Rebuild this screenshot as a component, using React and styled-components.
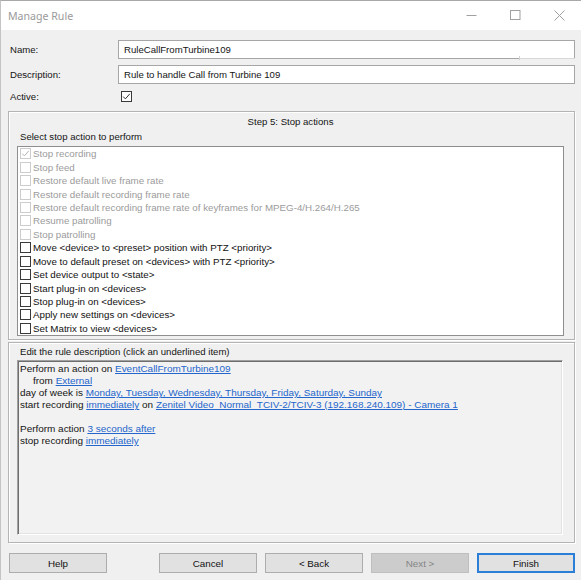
import React from "react";
import styled, { createGlobalStyle } from "styled-components";

const GlobalStyle = createGlobalStyle`
  html, body { margin: 0; padding: 0; background: #f0f0f0; }
  body { font-family: "Liberation Sans", Arial, sans-serif; }
  * { box-sizing: border-box; }
`;

const Window = styled.div`
  width: 581px;
  height: 580px;
  display: flex;
  flex-direction: column;
  background: #f0f0f0;
  border-top: 1px solid #a8a8a8;
  border-left: 1px solid #c4c4c4;
  overflow: hidden;
`;

const TitleBar = styled.div`
  height: 29px;
  flex: none;
  display: flex;
  align-items: center;
  background: #ffffff;
  padding-left: 7px;
`;

const Title = styled.div`
  flex: 1;
  font-family: "Noto Sans", "Open Sans", sans-serif;
  font-size: 10.6px;
  color: #9a9a9a;
  padding-top: 1px;
`;

const Controls = styled.div`
  display: flex;
`;

const CtrlButton = styled.div`
  width: 44px;
  height: 29px;
  display: flex;
  align-items: center;
  justify-content: center;
  color: #a0a0a0;
`;

const Body = styled.div`
  flex: 1;
  display: flex;
  flex-direction: column;
  padding: 10px 6px 7px 7px;
  font-size: 9.6px;
  color: #141414;
`;

const FormGrid = styled.div`
  display: grid;
  grid-template-columns: 110px 1fr;
  row-gap: 6px;
  align-items: center;
`;

const Label = styled.div`
  padding-left: 2px;
  line-height: 12px;
`;

const TextInput = styled.div`
  position: relative;
  height: 19px;
  background: #ffffff;
  border: 1px solid #a6a6a6;
  padding-left: 5px;
  display: flex;
  align-items: center;
  ${(p) =>
    p.$split &&
    `
    &::after {
      content: "";
      position: absolute;
      left: 400px;
      right: -1px;
      bottom: -1px;
      height: 1px;
      background: #d8d8d8;
    }
    &::before {
      content: "";
      position: absolute;
      left: 400px;
      bottom: -2px;
      width: 1px;
      height: 4px;
      background: #d0d0d0;
    }
  `}
`;

const CheckCell = styled.div`
  height: 13px;
  display: flex;
  align-items: center;
  padding-left: 3px;
`;

const Box = styled.span`
  width: 11px;
  height: 11px;
  flex: none;
  display: inline-flex;
  align-items: center;
  justify-content: center;
  background: #ffffff;
  border: 1px solid ${(p) => (p.$disabled ? "#cccccc" : "#3a3a3a")};
`;

const GroupBox = styled.div`
  border: 1px solid #b4b4b4;
  box-shadow: inset 1px 1px 0 #ffffff, 1px 1px 0 #ffffff;
  display: flex;
  flex-direction: column;
  margin-top: ${(p) => p.$mt}px;
  padding: ${(p) => p.$pad};
  ${(p) => p.$grow && "flex: 1;"}
`;

const GroupTitle = styled.div`
  text-align: center;
  line-height: 12px;
  height: 12px;
`;

const Caption = styled.div`
  line-height: 12px;
  height: 12px;
  padding-left: 3px;
  margin-top: ${(p) => p.$mt}px;
`;

const ListBox = styled.div`
  margin-top: 3px;
  background: #ffffff;
  border: 1px solid #8e8e8e;
  display: flex;
  flex-direction: column;
  font-size: 9.75px;
`;

const ListItem = styled.div`
  height: 13.45px;
  display: flex;
  align-items: center;
  padding-left: 2px;
  gap: 2px;
  color: ${(p) => (p.$disabled ? "#9b9b9b" : "#111111")};
  white-space: nowrap;
`;

const DescBox = styled.div`
  flex: 1;
  margin-top: 2px;
  margin-right: 1px;
  background: #f2f2f2;
  border-top: 1px solid #a0a0a0;
  border-left: 1px solid #a0a0a0;
  border-bottom: 1px solid #ffffff;
  border-right: 1px solid #ffffff;
  box-shadow: inset 1px 1px 0 #6e6e6e, inset -1px -1px 0 #e3e3e3;
  padding: 2px;
  font-size: 9.95px;
`;

const DescLine = styled.div`
  line-height: 12px;
  height: 12px;
  white-space: nowrap;
  padding-left: ${(p) => (p.$indent ? 13 : 0)}px;
`;

const Link = styled.span`
  color: #2466cc;
  text-decoration: underline;
  text-underline-offset: 1px;
`;

const ButtonRow = styled.div`
  margin-top: 10px;
  display: flex;
  gap: 8px;
  padding-left: 1px;
`;

const Spacer = styled.div`
  flex: 1;
`;

const Button = styled.div`
  width: 98px;
  height: 20px;
  display: flex;
  align-items: center;
  justify-content: center;
  font-size: 9.8px;
  background: ${(p) => (p.$disabled ? "#cccccc" : "#e1e1e1")};
  border: 1px solid ${(p) => (p.$primary ? "#2b7fd6" : p.$disabled ? "#bfbfbf" : "#adadad")};
  box-shadow: ${(p) => (p.$primary ? "inset 0 0 0 1px #2b7fd6" : "none")};
  color: ${(p) => (p.$disabled ? "#858585" : "#111111")};
`;

const Check = ({ color = "#333" }) => (
  <svg width="9" height="9" viewBox="0 0 9 9">
    <polyline points="1.2,4.6 3.4,6.9 7.8,1.8" fill="none" stroke={color} strokeWidth="1" />
  </svg>
);

const CheckBox = ({ checked, disabled }) => (
  <Box $disabled={disabled}>{checked && <Check color={disabled ? "#b5b5b5" : "#333333"} />}</Box>
);

const items = [
  { t: "Stop recording", d: true, c: true },
  { t: "Stop feed", d: true },
  { t: "Restore default live frame rate", d: true },
  { t: "Restore default recording frame rate", d: true },
  { t: "Restore default recording frame rate of keyframes for MPEG-4/H.264/H.265", d: true },
  { t: "Resume patrolling", d: true },
  { t: "Stop patrolling", d: true },
  { t: "Move <device> to <preset> position with PTZ <priority>" },
  { t: "Move to default preset on <devices> with PTZ <priority>" },
  { t: "Set device output to <state>" },
  { t: "Start plug-in on <devices>" },
  { t: "Stop plug-in on <devices>" },
  { t: "Apply new settings on <devices>" },
  { t: "Set Matrix to view <devices>" },
];

export default function App() {
  return (
    <>
      <GlobalStyle />
      <Window>
        <TitleBar>
          <Title>Manage Rule</Title>
          <Controls>
            <CtrlButton>
              <svg width="11" height="11" viewBox="0 0 11 11">
                <line x1="0.5" y1="5.5" x2="10.5" y2="5.5" stroke="currentColor" strokeWidth="1" />
              </svg>
            </CtrlButton>
            <CtrlButton>
              <svg width="11" height="11" viewBox="0 0 11 11">
                <rect x="0.5" y="0.5" width="9.5" height="9" fill="none" stroke="currentColor" strokeWidth="1" />
              </svg>
            </CtrlButton>
            <CtrlButton>
              <svg width="11" height="11" viewBox="0 0 11 11">
                <path d="M0.5 0.5 L10.5 10.5 M10.5 0.5 L0.5 10.5" stroke="currentColor" strokeWidth="1" />
              </svg>
            </CtrlButton>
          </Controls>
        </TitleBar>
        <Body>
          <FormGrid>
            <Label>Name:</Label>
            <TextInput $split>RuleCallFromTurbine109</TextInput>
            <Label>Description:</Label>
            <TextInput>Rule to handle Call from Turbine 109</TextInput>
            <Label>Active:</Label>
            <CheckCell>
              <CheckBox checked />
            </CheckCell>
          </FormGrid>

          <GroupBox $mt={8} $pad="4px 10px 3px 8px">
            <GroupTitle>Step 5: Stop actions</GroupTitle>
            <Caption $mt={3}>Select stop action to perform</Caption>
            <ListBox>
              {items.map((it) => (
                <ListItem key={it.t} $disabled={it.d}>
                  <CheckBox checked={it.c} disabled={it.d} />
                  <span>{it.t}</span>
                </ListItem>
              ))}
            </ListBox>
          </GroupBox>

          <GroupBox $mt={2} $pad="3px 10px 7px 8px" $grow>
            <Caption $mt={0}>Edit the rule description (click an underlined item)</Caption>
            <DescBox>
              <DescLine>
                Perform an action on <Link>EventCallFromTurbine109</Link>
              </DescLine>
              <DescLine $indent>
                from <Link>External</Link>
              </DescLine>
              <DescLine>
                day of week is <Link>Monday, Tuesday, Wednesday, Thursday, Friday, Saturday, Sunday</Link>
              </DescLine>
              <DescLine>
                start recording <Link>immediately</Link> on{" "}
                <Link>Zenitel Video_Normal_TCIV-2/TCIV-3 (192.168.240.109) - Camera 1</Link>
              </DescLine>
              <DescLine />
              <DescLine>
                Perform action <Link>3 seconds after</Link>
              </DescLine>
              <DescLine>
                stop recording <Link>immediately</Link>
              </DescLine>
            </DescBox>
          </GroupBox>

          <ButtonRow>
            <Button>Help</Button>
            <Spacer />
            <Button>Cancel</Button>
            <Button>&lt; Back</Button>
            <Button $disabled>Next &gt;</Button>
            <Button $primary>Finish</Button>
          </ButtonRow>
        </Body>
      </Window>
    </>
  );
}
